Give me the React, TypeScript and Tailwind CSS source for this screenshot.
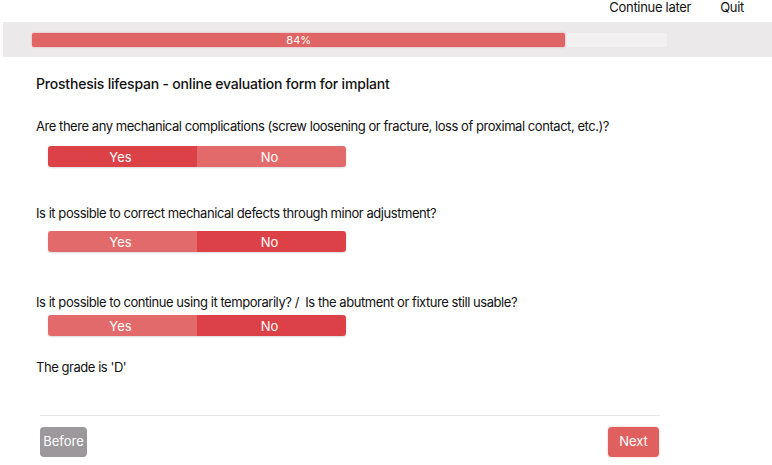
const questions = [
  {
    text: "Are there any mechanical complications (screw loosening or fracture, loss of proximal contact, etc.)?",
    answer: "Yes",
    mt: "mt-[22px]",
    gap: "mt-[10px]",
  },
  {
    text: "Is it possible to correct mechanical defects through minor adjustment?",
    answer: "No",
    mt: "mt-[36px]",
    gap: "mt-[8px]",
  },
  {
    text: "Is it possible to continue using it temporarily? /  Is the abutment or fixture still usable?",
    answer: "No",
    mt: "mt-[40px]",
    gap: "mt-[3px]",
  },
];

function Toggle({ value }: { value: string }) {
  return (
    <div className="ml-[48px] flex h-[21px] w-[298px] overflow-hidden rounded-[3px] shadow-[0_1px_2px_rgba(0,0,0,0.15)]">
      {["Yes", "No"].map((opt) => (
        <div
          key={opt}
          className={
            "flex flex-1 items-center justify-center pr-[4px] text-[13px] text-white " +
            (opt === value ? "bg-[#dc4147]" : "bg-[#e36a6a]")
          }
        >
          {opt}
        </div>
      ))}
    </div>
  );
}

export default function App() {
  const pct = 84;
  return (
    <div className="h-[465px] w-[772px] overflow-hidden bg-white font-['Inter',sans-serif] text-[#111]">
      {/* top links */}
      <div className="flex h-[22px] justify-end gap-[29px] pr-[28px] text-[13px] leading-[14px] tracking-[-0.3px]">
        <span>Continue later</span>
        <span>Quit</span>
      </div>

      {/* progress band */}
      <div className="ml-[3px] h-[35px] bg-[#ebe9e9] pl-[29px] pt-[11px]">
        <div className="flex h-[14px] w-[635px] rounded-[2px] bg-[#f2f0f0]">
          <div
            className="flex items-center justify-center rounded-[2px] bg-[#e06464] text-[11px] text-white shadow-[0_0_2px_rgba(224,100,100,0.6)]"
            style={{ width: `${pct}%` }}
          >
            {pct}%
          </div>
        </div>
      </div>

      <div className="pl-[36px] text-[13px] leading-[20px] tracking-[-0.45px]">
        <div className="mt-[17px] text-[14px] font-medium tracking-[-0.2px]">
          Prosthesis lifespan - online evaluation form for implant
        </div>

        {questions.map((q) => (
          <div key={q.text}>
            <div className={"whitespace-pre-wrap " + q.mt}>{q.text}</div>
            <div className={"-ml-[36px] tracking-normal " + q.gap}>
              <Toggle value={q.answer} />
            </div>
          </div>
        ))}

        <div className="mt-[21px]">The grade is 'D'</div>
      </div>

      <div className="mx-[40px] mt-[38px] w-[620px] border-t border-[#e6e4e4]" />

      <div className="mt-[11px] flex w-[659px] justify-between pl-[40px]">
        <button className="h-[30px] w-[47px] rounded-[4px] bg-[#9c989b] text-[13px] text-white">
          Before
        </button>
        <button className="h-[30px] w-[51px] rounded-[4px] bg-[#e05f5f] text-[13px] text-white shadow-[0_0_2px_rgba(224,95,95,0.5)]">
          Next
        </button>
      </div>
    </div>
  );
}
